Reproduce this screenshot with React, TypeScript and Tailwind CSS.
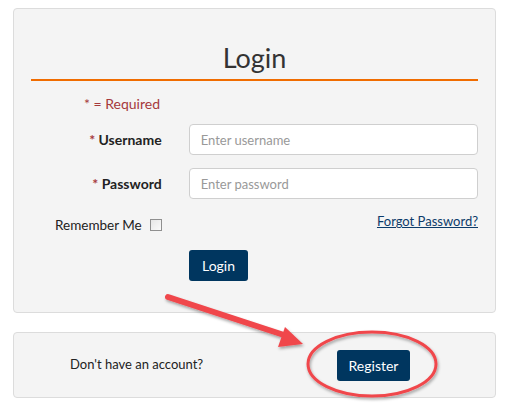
import React from 'react';

const font = { fontFamily: 'Lato, "Liberation Sans", sans-serif' };

export default function App() {
  return (
    <div className="relative w-[509px] h-[404px] bg-white text-[#333]" style={font}>
      {/* ── Login panel ─────────────────────────────────────────────── */}
      <div className="absolute left-0 top-0 w-full pt-[8px] px-[13px]">
        <div className="h-[305px] rounded-[4px] border border-[#dcdcdc] bg-[#f4f4f4] px-[17px]">
          <h2 className="pt-[33px] pb-[5px] text-center text-[27px] leading-[32px] text-[#333]">Login</h2>
          <div className="h-[2px] bg-[#f06c00]" />

          <p className="mt-[14px] pl-[53px] text-[14px] leading-[18px] text-[#a6393c]">* = Required</p>

          <div className="mt-[11px] flex flex-col gap-[13px]">
            <div className="flex items-center">
              <label className="w-[131px] text-right text-[14px] font-bold text-[#222]">
                <span className="text-[#a6393c]">*</span> Username
              </label>
              <input
                placeholder="Enter username"
                className="ml-[27px] h-[31px] w-[290px] rounded-[4px] border border-[#cfcfcf] bg-white px-[11px] text-[13px] outline-none placeholder:text-[#999]"
              />
            </div>
            <div className="flex items-center">
              <label className="w-[131px] text-right text-[14px] font-bold text-[#222]">
                <span className="text-[#a6393c]">*</span> Password
              </label>
              <input
                placeholder="Enter password"
                className="ml-[27px] h-[31px] w-[290px] rounded-[4px] border border-[#cfcfcf] bg-white px-[11px] text-[13px] outline-none placeholder:text-[#999]"
              />
            </div>
          </div>

          <div className="mt-[10px] flex items-center justify-between pl-[24px]">
            <label className="mt-[6px] flex items-center gap-[8px] text-[13.5px] text-[#222]">
              Remember Me
              <span className="inline-block h-[12px] w-[12px] border border-[#8f8f8f] bg-gradient-to-br from-[#e6e6e6] to-[#fafafa]" />
            </label>
            <a href="#" className="text-[13px] text-[#0c3b6a] underline">Forgot Password?</a>
          </div>

          <div className="mt-[15px] pl-[158px]">
            <button className="h-[31px] rounded-[3px] bg-[#00365f] px-[13px] text-[14px] text-white">Login</button>
          </div>
        </div>
      </div>

      {/* ── Register panel ──────────────────────────────────────────── */}
      <div className="absolute left-0 top-[332px] w-full px-[13px]">
        <div className="flex h-[66px] items-center rounded-[4px] border border-[#dcdcdc] bg-[#f4f4f4]">
          <span className="ml-[56px] w-[133px] whitespace-nowrap text-[13px] text-[#222]">Don't have an account?</span>
          <button className="ml-[134px] h-[31px] w-[73px] rounded-[3px] bg-[#00365f] text-[14px] text-white">Register</button>
        </div>
      </div>

      {/* ── Annotation: arrow + ellipse ─────────────────────────────── */}
      <svg className="pointer-events-none absolute left-0 top-0" width="509" height="404" viewBox="0 0 509 404">
        <defs>
          <filter id="sh" x="-20%" y="-20%" width="140%" height="140%">
            <feDropShadow dx="1" dy="2" stdDeviation="1.5" floodColor="#000" floodOpacity="0.35" />
          </filter>
        </defs>
        <g filter="url(#sh)">
          <line x1="168" y1="297" x2="287" y2="336" stroke="#f0474c" strokeWidth="6" strokeLinecap="round" />
          <polygon points="303,344 278,347 285,327" fill="#f0474c" />
          <ellipse cx="372" cy="364" rx="64" ry="32" fill="none" stroke="#f0474c" strokeWidth="3" />
        </g>
      </svg>
    </div>
  );
}
